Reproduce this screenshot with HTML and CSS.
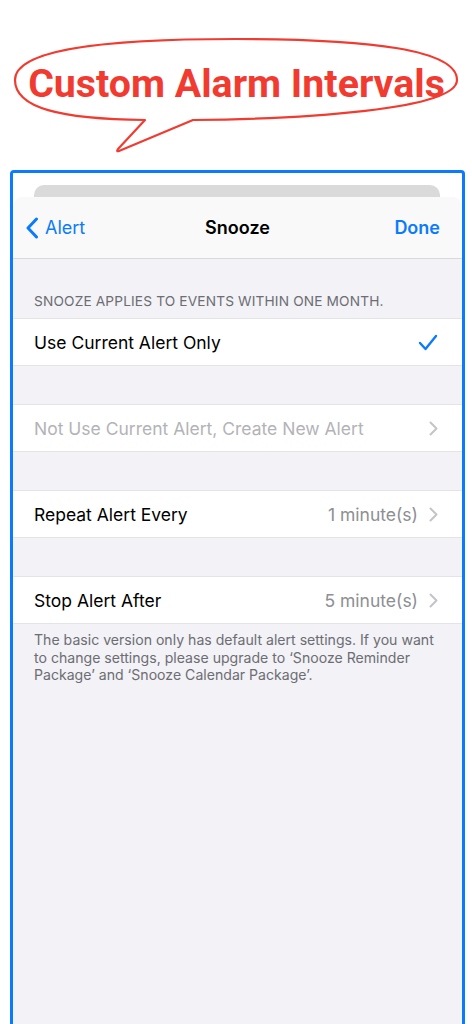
FILE: index.html
```html
<!DOCTYPE html>
<html>
<head>
<meta charset="utf-8">
<link rel="stylesheet" href="styles.css">
</head>
<body>
<header class="hero">
  <svg class="bubble" width="472" height="160" viewBox="0 0 472 160">
    <path d="M15 80 C15 50 100 39 236 39 C372 39 457 50 457 80 C457 110 300 119 193 120 L119 151 Q116 152 118 149 L145 120 C60 119 15 108 15 80 Z" fill="#fff" stroke="#f23b30" stroke-width="2.2" stroke-linejoin="round"/>
  </svg>
  <h1 class="hero-title">Custom Alarm Intervals</h1>
</header>

<div class="frame">
  <div class="back-card"></div>
  <div class="sheet">
    <nav class="navbar">
      <a class="nav-back">
        <svg class="back-chevron" width="14" height="22" viewBox="0 0 14 22"><path d="M11.5 2 L3 11 L11.5 20" fill="none" stroke="#0a7aff" stroke-width="3" stroke-linecap="round" stroke-linejoin="round"/></svg>
        <span>Alert</span>
      </a>
      <span class="nav-title">Snooze</span>
      <a class="nav-done">Done</a>
    </nav>

    <div class="section-header">SNOOZE APPLIES TO EVENTS WITHIN ONE MONTH.</div>
    <div class="group">
      <div class="row">
        <span class="row-label">Use Current Alert Only</span>
        <svg class="check" width="20" height="17" viewBox="0 0 20 17"><path d="M2 9 L7.5 15 L18 2" fill="none" stroke="#0a7aff" stroke-width="2.4" stroke-linecap="round" stroke-linejoin="round"/></svg>
      </div>
    </div>

    <div class="gap"></div>
    <div class="group">
      <div class="row">
        <span class="row-label disabled">Not Use Current Alert, Create New Alert</span>
        <svg class="chev" width="9" height="15" viewBox="0 0 9 15"><path d="M1.5 1.5 L7.5 7.5 L1.5 13.5" fill="none" stroke="#c4c4c8" stroke-width="2" stroke-linecap="round" stroke-linejoin="round"/></svg>
      </div>
    </div>

    <div class="gap"></div>
    <div class="group">
      <div class="row">
        <span class="row-label">Repeat Alert Every</span>
        <span class="row-value">1 minute(s)</span>
        <svg class="chev" width="9" height="15" viewBox="0 0 9 15"><path d="M1.5 1.5 L7.5 7.5 L1.5 13.5" fill="none" stroke="#c4c4c8" stroke-width="2" stroke-linecap="round" stroke-linejoin="round"/></svg>
      </div>
    </div>

    <div class="gap"></div>
    <div class="group">
      <div class="row">
        <span class="row-label">Stop Alert After</span>
        <span class="row-value">5 minute(s)</span>
        <svg class="chev" width="9" height="15" viewBox="0 0 9 15"><path d="M1.5 1.5 L7.5 7.5 L1.5 13.5" fill="none" stroke="#c4c4c8" stroke-width="2" stroke-linecap="round" stroke-linejoin="round"/></svg>
      </div>
    </div>
    <p class="footer-note">The basic version only has default alert settings. If you want to change settings, please upgrade to ‘Snooze Reminder Package’ and ‘Snooze Calendar Package’.</p>
  </div>
</div>
</body>
</html>
```

FILE: styles.css
```css
* { box-sizing: border-box; }
html, body { margin: 0; padding: 0; background: #fff; }
body {
  font-family: Inter, "Noto Sans", "Liberation Sans", sans-serif;
  width: 472px;
  height: 1024px;
  overflow: hidden;
}

.hero {
  position: relative;
  height: 170px;
}
.bubble {
  position: absolute;
  left: 0;
  top: 0;
}
.hero-title {
  position: relative;
  margin: 0;
  padding-top: 60px;
  padding-left: 1px;
  text-align: center;
  white-space: nowrap;
  font-family: Roboto, "Liberation Sans", sans-serif;
  font-weight: 700;
  font-size: 39.3px;
  line-height: 48px;
  letter-spacing: 0;
  color: #f23b30;
}

.frame {
  margin: 0 7px 0 10px;
  border: 3px solid #0a7aff;
  border-bottom: none;
  border-radius: 4px 4px 0 0;
  padding-top: 12px;
  height: 854px;
  background: #fff;
}
.back-card {
  height: 12px;
  margin: 0 22px 0 21px;
  background: #dadada;
  border-radius: 10px 10px 0 0;
}
.sheet {
  background: #f2f2f7;
  border-radius: 10px 10px 0 0;
  overflow: hidden;
  height: 839px;
}

.navbar {
  height: 62px;
  background: #f9f9f9;
  border-bottom: 1px solid #d9d9dc;
  display: grid;
  grid-template-columns: 1fr auto 1fr;
  align-items: center;
  padding: 0 22px 0 12px;
  font-size: 18px;
}
.nav-back {
  display: flex;
  align-items: center;
  gap: 6px;
  color: #0a7aff;
}
.nav-title {
  font-weight: 600;
  color: #000;
  position: relative;
  left: 5px;
}
.nav-done {
  justify-self: end;
  font-weight: 600;
  color: #0a7aff;
}

.section-header {
  height: 59px;
  display: flex;
  align-items: flex-end;
  padding: 0 21px 9px;
  font-size: 13.7px;
  color: #6d6d72;
  letter-spacing: 0.15px;
}

.group {
  background: #fff;
  border-top: 1px solid #e4e4e7;
  border-bottom: 1px solid #e4e4e7;
}
.row {
  height: 46px;
  display: flex;
  align-items: center;
  padding: 0 24px 0 21px;
  font-size: 17.5px;
  color: #000;
}
.row-label { flex: 1; }
.row-label.disabled { color: #b3b3b7; }
.row-value {
  color: #8e8e93;
  margin-right: 11px;
}
.check { margin-right: 0; }
.gap { height: 38px; }

.footer-note {
  margin: 0;
  padding: 7px 14px 0 21px;
  font-size: 14.1px;
  line-height: 17.6px;
  color: #6d6d72;
}
```
